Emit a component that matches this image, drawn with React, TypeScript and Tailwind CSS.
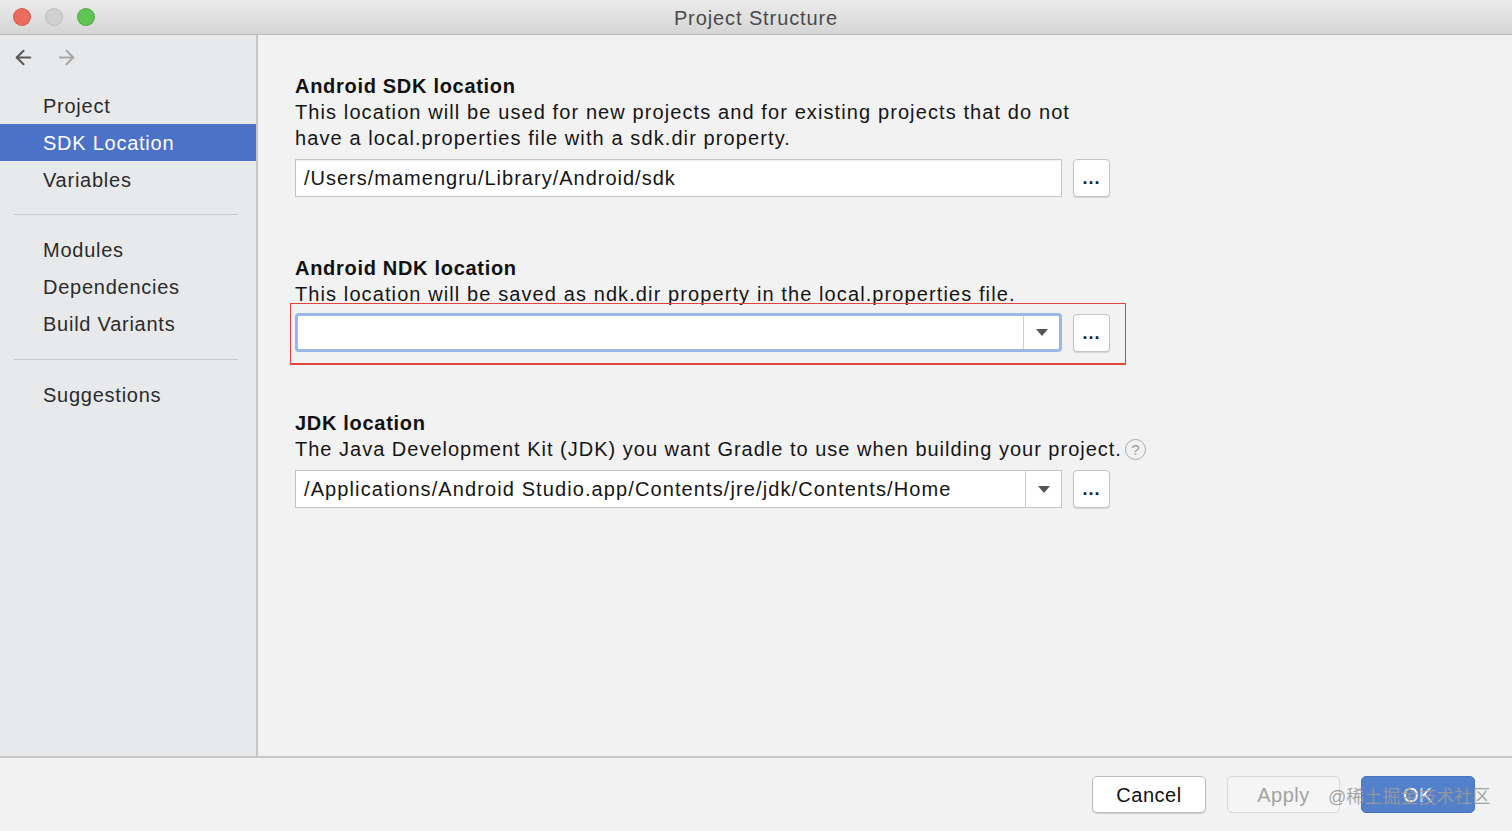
import { ArrowLeft, ArrowRight } from 'lucide-react'

const font = { fontFamily: '"Liberation Sans", Arial, "Noto Sans CJK SC", sans-serif' }

const navTop = ['Project', 'SDK Location', 'Variables']
const navMid = ['Modules', 'Dependencies', 'Build Variants']

const NavItem = ({ label, active }: { label: string; active?: boolean }) => (
  <div
    className={
      'flex h-[37px] items-center pl-[43px] text-[20px] tracking-[0.75px] ' +
      (active ? 'bg-[#4b72c6] text-white' : 'text-[#2b2b2b]')
    }
  >
    {label}
  </div>
)

const Divider = ({ top = 16 }: { top?: number }) => (
  <div
    className={
      'mx-[14px] mb-[16px] h-px w-[224px] bg-[#c9c9cb] ' + (top === 16 ? 'mt-[16px]' : 'mt-[17px]')
    }
  />
)

const Caret = () => (
  <div className="flex h-full w-[36px] items-center justify-center border-l border-[#cfcfcf]">
    <div className="h-0 w-0 border-x-[6px] border-t-[7px] border-x-transparent border-t-[#555555]" />
  </div>
)

const BrowseButton = () => (
  <button className="flex h-[38px] w-[37px] items-end justify-center rounded-[4px] border border-[#c4c4c4] bg-white pb-[9px] text-[18px] font-bold leading-none tracking-[1px] text-[#222] shadow-[0_1px_1px_rgba(0,0,0,0.12)]">
    ...
  </button>
)

const Section = ({
  title,
  children,
}: {
  title: string
  children: React.ReactNode
}) => (
  <div className="flex flex-col">
    <div className="text-[20px] leading-[26px] font-bold tracking-[0.7px] text-[#111]">{title}</div>
    {children}
  </div>
)

export default function App() {
  return (
    <div
      style={font}
      className="relative flex h-[831px] w-[1512px] flex-col overflow-hidden bg-[#f2f2f2]"
    >
      {/* title bar */}
      <div className="relative flex h-[35px] shrink-0 items-center justify-center border-b border-[#b9b9b9] bg-gradient-to-b from-[#ececec] to-[#d5d5d5]">
        <div className="absolute left-[14px] top-[9px] flex gap-[16px]">
          <div className="size-[16px] rounded-full bg-[#ec6a5e] ring-1 ring-[#d45447]" />
          <div className="size-[16px] rounded-full bg-[#d0d0d0] ring-1 ring-[#bdbdbd]" />
          <div className="size-[16px] rounded-full bg-[#61c454] ring-1 ring-[#4ea93f]" />
        </div>
        <span className="pt-[2px] text-[20px] tracking-[0.9px] text-[#4a4a4a]">Project Structure</span>
      </div>

      <div className="flex flex-1">
        {/* sidebar */}
        <div className="flex w-[258px] shrink-0 flex-col border-r-2 border-[#c6c6c6] bg-[#e8e9eb]">
          <div className="flex h-[52px] items-center gap-[20px] pb-[8px] pl-[12px]">
            <ArrowLeft className="size-[23px] text-[#5a5a5a]" strokeWidth={2.2} />
            <ArrowRight className="size-[23px] text-[#a8a8a8]" strokeWidth={2.2} />
          </div>
          {navTop.map((l) => (
            <NavItem key={l} label={l} active={l === 'SDK Location'} />
          ))}
          <Divider />
          {navMid.map((l) => (
            <NavItem key={l} label={l} />
          ))}
          <Divider top={17} />
          <NavItem label="Suggestions" />
        </div>

        {/* content */}
        <div className="flex flex-1 flex-col gap-[58px] pl-[37px] pt-[38px] text-[#151515]">
          <Section title="Android SDK location">
            <p className="text-[20px] leading-[26px] tracking-[1.1px]">
              This location will be used for new projects and for existing projects that do not
              <br />
              have a local.properties file with a sdk.dir property.
            </p>
            <div className="mt-[8px] flex gap-[11px]">
              <div className="flex h-[38px] w-[767px] items-center border border-[#c4c4c4] bg-white pl-[8px] text-[20px] tracking-[1px] shadow-[inset_0_1px_1px_rgba(0,0,0,0.06)]">
                /Users/mamengru/Library/Android/sdk
              </div>
              <BrowseButton />
            </div>
          </Section>

          <Section title="Android NDK location">
            <p className="text-[20px] leading-[26px] tracking-[1.1px]">
              This location will be saved as ndk.dir property in the local.properties file.
            </p>
            <div className="mt-[6px] flex items-center gap-[11px]">
              <div className="flex h-[39px] w-[767px] items-center justify-end rounded-[4px] border-[3px] border-[#9bb7e6] bg-white">
                <Caret />
              </div>
              <BrowseButton />
            </div>
          </Section>

          <Section title="JDK location">
            <div className="flex items-center gap-[3px]">
              <p className="text-[20px] leading-[26px] tracking-[1px]">
                The Java Development Kit (JDK) you want Gradle to use when building your project.
              </p>
              <div className="flex size-[21px] items-center justify-center rounded-full border border-[#a9a9a9] text-[15px] leading-none text-[#9a9a9a]">
                ?
              </div>
            </div>
            <div className="mt-[8px] flex gap-[11px]">
              <div className="flex h-[38px] w-[767px] items-center justify-between border border-[#c4c4c4] bg-white pl-[8px] text-[20px] tracking-[1.1px]">
                <span>/Applications/Android Studio.app/Contents/jre/jdk/Contents/Home</span>
                <Caret />
              </div>
              <BrowseButton />
            </div>
          </Section>
        </div>
      </div>

      {/* footer */}
      <div className="flex h-[75px] shrink-0 items-start justify-end gap-[21px] border-t-2 border-[#c9c9c9] pr-[37px] pt-[18px]">
        <button className="h-[37px] w-[114px] rounded-[5px] border border-[#bdbdbd] bg-white text-[20px] tracking-[0.5px] text-[#111] shadow-[0_1px_1px_rgba(0,0,0,0.15)]">
          Cancel
        </button>
        <button className="h-[37px] w-[113px] rounded-[5px] border border-[#d6d6d6] bg-[#f5f5f5] text-[20px] tracking-[0.5px] text-[#a3a3a3]">
          Apply
        </button>
        <button className="h-[37px] w-[114px] rounded-[5px] border border-[#4a73bb] bg-[#5380cb] text-[20px] tracking-[0.5px] text-white">
          OK
        </button>
      </div>

      {/* annotation */}
      <div className="pointer-events-none absolute left-[290px] top-[303px] h-[62px] w-[836px] border-x border-t border-b-2 border-[#e0463a]" />

      {/* watermark */}
      <div className="pointer-events-none absolute left-[1328px] top-[784px] text-[18px] text-[#9a9a9a]/90">
        @稀土掘金技术社区
      </div>
    </div>
  )
}
